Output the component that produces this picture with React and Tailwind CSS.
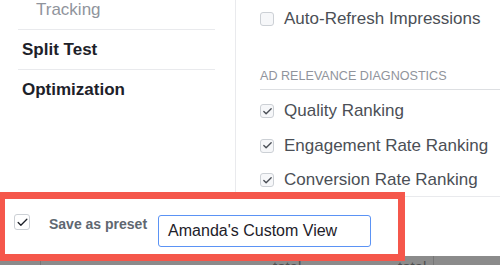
import { Check } from "lucide-react";

const font = { fontFamily: '"Liberation Sans", Arial, sans-serif' };

const SmallBox = ({ checked }) => (
  <span className="w-[14px] h-[14px] shrink-0 rounded-[3px] border border-[#ccd0d5] bg-[#f6f7f9] flex items-center justify-center">
    {checked && <Check size={11} strokeWidth={3} className="text-[#4b4f56]" />}
  </span>
);

const Option = ({ label, checked }) => (
  <div className="flex items-center gap-[10px] h-[20px]">
    <SmallBox checked={checked} />
    <span className="text-[17px] leading-[20px] text-[#4b4f56]">{label}</span>
  </div>
);

export default function App() {
  return (
    <div
      className="relative w-[500px] h-[265px] overflow-hidden bg-white flex flex-col"
      style={font}
    >
      <div className="flex h-[196px] shrink-0">
        {/* left nav */}
        <div className="w-[236px] shrink-0 border-r border-[#e9eaed] pl-[18px] pr-[20px]">
          <div className="h-[30px] border-b border-[#e9eaed] pl-[18px]">
            <div className="text-[17px] leading-[20px] text-[#90949c]">Tracking</div>
          </div>
          <div className="h-[40px] border-b border-[#e9eaed] pl-[4px] flex items-center">
            <span className="text-[17px] font-bold text-[#1d2129]">Split Test</span>
          </div>
          <div className="h-[40px] pl-[4px] flex items-center">
            <span className="text-[17px] font-bold text-[#1d2129]">Optimization</span>
          </div>
        </div>

        {/* right options */}
        <div className="flex-1 pl-[24px] pt-[9px]">
          <Option label="Auto-Refresh Impressions" />
          <div className="mt-[40px] h-[21px] border-b border-[#dddfe2] text-[12.6px] leading-[15px] text-[#90949c]">
            AD RELEVANCE DIAGNOSTICS
          </div>
          <div className="mt-[11px] flex flex-col gap-[14.5px]">
            <Option label="Quality Ranking" checked />
            <Option label="Engagement Rate Ranking" checked />
            <Option label="Conversion Rate Ranking" checked />
          </div>
        </div>
      </div>

      {/* footer */}
      <div className="h-[60px] shrink-0 border-t border-[#e9eaed] flex items-start pl-[14px] pt-[17px]">
        <span className="w-[16px] h-[16px] shrink-0 rounded-[3px] border border-[#ccd0d5] bg-white flex items-center justify-center">
          <Check size={13} strokeWidth={2.4} className="text-[#1d2129]" />
        </span>
        <span className="ml-[19px] mt-[1px] text-[14px] leading-[18px] font-bold text-[#606770]">
          Save as preset
        </span>
        <div className="ml-[11px] mt-[1px] w-[213px] h-[32px] rounded-[3px] border border-[#5b93f5] flex items-center pl-[9px] text-[16px] text-[#1d2129]">
          Amanda's Custom View
        </div>
      </div>

      {/* dimmed table header below */}
      <div className="flex-1 bg-[#8b8b8b] relative">
        <span className="absolute left-[40px] top-[0px] w-px h-full bg-[#777]" />
        <span className="absolute left-[273px] top-[3px] text-[15px] leading-[15px] text-[#505050]">total</span>
        <span className="absolute left-[398px] top-[3px] text-[15px] leading-[15px] text-[#505050]">total</span>
        <span className="absolute left-[433px] top-[0px] w-px h-full bg-[#777]" />
      </div>

      {/* highlight annotation */}
      <div className="absolute left-[-2px] top-[192px] w-[407px] h-[69px] border-[7px] border-[#f5574b]" />
    </div>
  );
}
